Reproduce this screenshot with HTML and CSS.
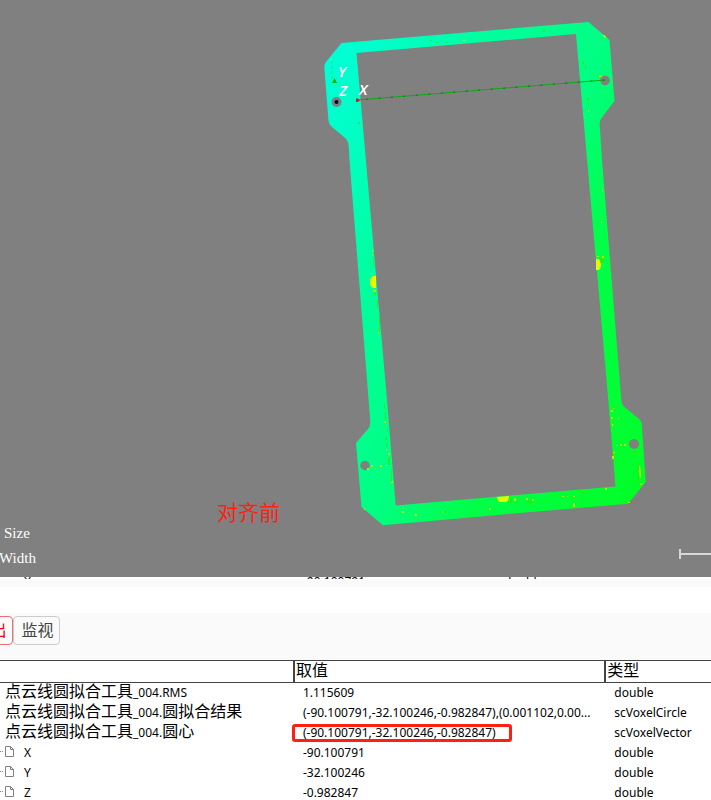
FILE: index.html
```html
<!DOCTYPE html>
<html lang="zh-CN">
<head>
<meta charset="utf-8">
<title>点云线圆拟合工具</title>
<link rel="stylesheet" href="styles.css">
</head>
<body>
<main class="app">
  <section class="viewer">
    <svg class="scene" viewBox="0 0 711 577" aria-hidden="true">
      <defs>
        <linearGradient id="depth" gradientUnits="userSpaceOnUse" x1="330" y1="50" x2="750" y2="253">
          <stop offset="0" stop-color="#00ffd8"/>
          <stop offset=".12" stop-color="#00ffc4"/>
          <stop offset=".3" stop-color="#00ff9c"/>
          <stop offset=".53" stop-color="#00ff80"/>
          <stop offset=".7" stop-color="#00ff48"/>
          <stop offset="1" stop-color="#00ff28"/>
        </linearGradient>
      </defs>
      <path fill="url(#depth)" fill-rule="evenodd" d="M341.500 43L588.500 22L609.500 40L614.500 101L601.500 118Q599.500 121 599.700 125L602 160L621.300 400Q621.500 405 625 407.500L639 419Q641.500 421 641.800 425L645.700 482L628 503.700L500 514.700L383 525.300L361.500 507L356 443L368 429Q370.600 426 370.300 421L349.500 160L348.700 146Q348.300 140 344 137L332 127Q329 124.500 328.500 121L324.300 67Q324.200 64 326 62ZM356.500 53L576 34L608.300 400L615.500 486.500L395.700 505.500L387 400L372 230Z"/>
      <g fill="#808080">
        <circle cx="336.500" cy="102" r="5"/>
        <circle cx="605" cy="80.500" r="4.800"/>
        <circle cx="365" cy="465.500" r="4.700"/>
        <circle cx="634" cy="444" r="5"/>
      </g>
      <path d="M357 100L605 80" stroke="#10a818" fill="none"/>
      <path d="M366 99.300L605 80" stroke="#008000" stroke-dasharray="2 10.500" fill="none"/>
      <path d="M332 61V81" stroke="#20e060" stroke-dasharray="3 2"/>
      <path d="M334.500 78l2.500 5h-5z" fill="#00b400"/>
      <path d="M356 98.500h2l2 2-2 1.500h-2z" fill="#f01010"/>
      <circle cx="336.500" cy="102" r="2" fill="#000030"/>
      <g class="axis">
        <text x="338" y="77">Y</text>
        <text x="339" y="96">Z</text>
        <text x="359" y="95">X</text>
      </g>
      <g fill="#e8f800">
        <path d="M376 276h-3q-3 1-3 6t3 6h3z"/>
        <path d="M596 259h3q2 2 2 5.500t-2 5.500h-3z"/>
        <path d="M497 497l12-1q0 5-3 6h-6q-3-1-3-5z"/>
        <path d="M639 466h1l1 10-1 3z"/>
      </g>
      <g fill="#b8e800">
        <path d="M463 40h2v1h-2zM330 59h2v1h-2zM602 35h3v1h-3zM604 36h2v2h-2zM599 75h3v2h-3zM588 110h1v2h-1zM591 115h1v1h-1zM372 250h1v2h-1zM372 254h1v2h-1zM371 273h2v1h-2zM373 290h3v2h-3zM378 332h2v2h-2z"/>
        <path d="M602 189h1v3h-1zM601 222h1v1h-1zM597 256h2v1h-2zM602 256h2v3h-2zM384 421h2v2h-2zM386 449h1v2h-1zM388 453h2v2h-2zM371 465h2v2h-2zM375 468h1v1h-1zM380 465h2v2h-2zM385 465h2v1h-2zM367 468h2v2h-2zM391 481h2v2h-2zM364 508h1v2h-1zM403 508h1v1h-1zM402 511h2v2h-2zM415 514h2v2h-2zM442 511h1v2h-1zM489 508h2v2h-2z"/>
        <path d="M514 498h2v3h-2zM526 498h2v2h-2zM532 499h2v2h-2zM562 496h2v1h-2zM567 496h1v1h-1zM573 496h2v1h-2zM573 503h2v4h-2zM605 488h2v2h-2zM611 410h2v2h-2zM611 417h2v2h-2zM612 424h2v2h-2zM613 408h2v1h-2zM616 445h2v1h-2zM620 444h2v2h-2zM624 444h2v2h-2zM613 452h2v1h-2zM612 456h2v3h-2zM640 483h2v2h-2zM628 502h2v1h-2zM618 418h1v1h-1z"/>
      </g>
      <g fill="#38e400" opacity=".7">
        <path d="M430 40h2v1h-2zM436 42h2v1h-2zM446 42h2v1h-2zM543 29h2v3h-2zM582 62h2v2h-2zM585 65h1v4h-1zM600 67h2v1h-2zM587 98h2v3h-2zM358 122h2v2h-2zM373 257h1v9h-1zM374 292h2v3h-2zM377 300h1v8h-1zM379 316h1v18h-1zM600 258h4v5h-4zM597 223h1v3h-1z"/>
        <path d="M384 403h1v6h-1zM385 412h1v8h-1zM385 437h2v3h-2zM386 443h1v4h-1zM388 457h2v8h-2zM391 469h1v13h-1zM510 500h2v3h-2zM528 501h5v2h-5zM579 490h2v2h-2zM582 492h4v2h-4zM581 506h1v1h-1zM614 406h1v4h-1zM613 419h1v8h-1zM638 465h1v18h-1zM387 429h1v3h-1zM633 451h4v2h-4z"/>
      </g>
      <text class="caption" x="217" y="520">对齐前</text>
      <path d="M680 549v10M680 554h31" stroke="#d8d8d8" stroke-width="2" fill="none"/>
    </svg>
    <div class="stats">
      <span class="stat stat-size">Size</span>
      <span class="stat">Width</span>
    </div>
  </section>

  <div class="cut-row"><span>X</span><span>-90.100791</span><span>double</span></div>
  <div class="splitter"></div>

  <section class="output">
    <nav class="tabs">
      <button class="tab tab-active" type="button">输出</button>
      <button class="tab" type="button">监视</button>
    </nav>
    <table class="grid">
      <colgroup><col class="col-name"><col class="col-value"><col></colgroup>
      <thead><tr><th scope="col"></th><th scope="col">取值</th><th scope="col">类型</th></tr></thead>
      <tbody>
        <tr><td class="name"><b>点云线圆拟合工具</b>_004.RMS</td><td>1.115609</td><td>double</td></tr>
        <tr><td class="name"><b>点云线圆拟合工具</b>_004.<b>圆拟合结果</b></td><td>(-90.100791,-32.100246,-0.982847),(0.001102,0.00...</td><td>scVoxelCircle</td></tr>
        <tr><td class="name"><b>点云线圆拟合工具</b>_004.<b>圆心</b></td><td><span class="marked">(-90.100791,-32.100246,-0.982847)</span></td><td>scVoxelVector</td></tr>
        <tr><td class="leaf"><svg class="doc" viewBox="0 0 14 12" aria-hidden="true"><path class="dots" d="M0 6.500h4"/><path d="M5.500 1.500h5l3 3v7h-8zM10.500 1.500v3h3"/></svg>X</td><td>-90.100791</td><td>double</td></tr>
        <tr><td class="leaf"><svg class="doc" viewBox="0 0 14 12" aria-hidden="true"><path class="dots" d="M0 6.500h4"/><path d="M5.500 1.500h5l3 3v7h-8zM10.500 1.500v3h3"/></svg>Y</td><td>-32.100246</td><td>double</td></tr>
        <tr><td class="leaf"><svg class="doc" viewBox="0 0 14 12" aria-hidden="true"><path class="dots" d="M0 6.500h4"/><path d="M5.500 1.500h5l3 3v7h-8zM10.500 1.500v3h3"/></svg>Z</td><td>-0.982847</td><td>double</td></tr>
      </tbody>
    </table>
  </section>
</main>
</body>
</html>
```
FILE: styles.css
```css
* {
  box-sizing: border-box;
}

body {
  margin: 0;
  background: #fff;
  color: #000;
  font: 12px/20px "Noto Sans", "Noto Sans CJK SC", sans-serif;
}

.app {
  overflow: hidden;
}

.viewer {
  position: relative;
  background: #808080;
}

.scene {
  display: block;
  width: 100%;
}

.axis {
  fill: #fff;
  font: italic 600 15px "Open Sans", sans-serif;
}

.caption {
  fill: #ff2010;
  font: 21px "Noto Sans CJK SC", sans-serif;
}

.stats {
  position: absolute;
  left: 0;
  bottom: 6px;
  display: flex;
  flex-direction: column;
  margin-left: -1px;
  color: #fff;
  font: 15px/25px "Liberation Serif", serif;
}

.stat-size {
  padding-left: 5px;
}

/* last visible line of the list behind the viewer */
.cut-row {
  display: grid;
  grid-template-columns: 279px 201px 1fr;
  align-items: end;
  height: 2px;
  padding-left: 24px;
  overflow: hidden;
  line-height: 10px;
}

.splitter {
  height: 34px;
  border-top: 8px solid #fafafa;
}

.tabs {
  display: flex;
  align-items: flex-start;
  height: 47px;
  margin-left: -34px;
  padding-top: 3px;
  background: #fafafa;
}

.tab {
  width: 47px;
  height: 29px;
  padding: 0 0 4px 2px;
  border: 1px solid #ccc;
  border-radius: 4px;
  background: #fafafa;
  color: #444;
  font: 16px/24px "Noto Sans CJK SC", sans-serif;
}

.tab-active {
  border-color: #f06c78;
  color: #f00014;
}

.grid {
  width: 100%;
  table-layout: fixed;
  border-collapse: separate;
  border-spacing: 0;
}

.col-name {
  width: 41.2%;
}

.col-value {
  width: 43.8%;
}

th {
  height: 23px;
  padding: 0 1px 4px;
  border: solid #444;
  border-width: 1px 0;
  font: 16px/17px "Noto Sans CJK SC", sans-serif;
  text-align: left;
}

th + th {
  border-left-width: 2px;
}

td {
  height: 20px;
  padding: 0 0 0 10px;
  line-height: 20px;
  white-space: nowrap;
}

.name {
  padding-left: 5px;
}

.name b {
  font: 16px/1px "Noto Sans CJK SC", sans-serif;
}

.leaf {
  padding-left: 0;
}

.doc {
  width: 14px;
  height: 12px;
  margin-right: 10px;
  fill: none;
  stroke: #808080;
}

.dots {
  stroke-dasharray: 1 1;
}

.marked {
  position: relative;
}

.marked::after {
  content: "";
  position: absolute;
  inset: 0 -16px -1px -11px;
  border: 3px solid #ff2010;
  border-radius: 3px;
}
```
